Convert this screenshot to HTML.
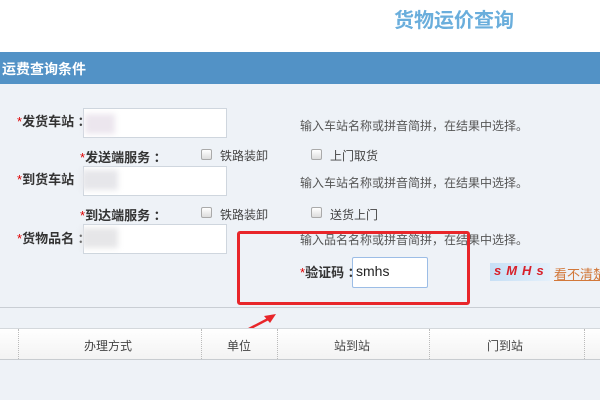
<!DOCTYPE html>
<html><head><meta charset="utf-8"><style>
*{margin:0;padding:0;box-sizing:border-box}
body{width:600px;height:400px;overflow:hidden;background:#eef2f7;font-family:"Liberation Sans","Noto Sans CJK SC",sans-serif;position:relative;color:#333}
.a{position:absolute;white-space:nowrap}
.lab{font-size:13px;color:#333;font-weight:bold}
.lab b{color:#d00;font-weight:normal}
.inp{position:absolute;background:#fff;border:1px solid #cfd6de}
.hint{font-size:12px;color:#555}
.cb{position:absolute;width:11px;height:11px;border:1px solid #aaa;border-radius:2px;background:linear-gradient(#fff,#ddd)}
.opt{font-size:12px;color:#444}
.th{font-size:12px;color:#444}
.vd{position:absolute;top:329px;height:30px;border-left:1px dotted #bbb}
</style></head><body>
<div class="a" style="left:0;top:0;width:600px;height:52px;background:#fff"></div>
<div class="a" style="left:394px;top:4px;font-size:20px;font-weight:bold;color:#6aaedc">货物运价查询</div>
<div class="a" style="left:0;top:52px;width:600px;height:32px;background:#5292c6"></div>
<div class="a" style="left:2px;top:59px;font-size:14px;font-weight:bold;color:#fff">运费查询条件</div>

<div class="a lab" style="left:17px;top:111px"><b>*</b>发货车站 ：</div>
<div class="inp" style="left:83px;top:108px;width:144px;height:30px"></div>
<div class="a" style="left:85px;top:114px;width:30px;height:20px;background:#ece6ee;filter:blur(3px)"></div>
<div class="a hint" style="left:300px;top:117px">输入车站名称或拼音简拼，在结果中选择。</div>

<div class="a lab" style="left:80px;top:147px"><b>*</b>发送端服务 ：</div>
<div class="cb" style="left:201px;top:149px"></div>
<div class="a opt" style="left:220px;top:147px">铁路装卸</div>
<div class="cb" style="left:311px;top:149px"></div>
<div class="a opt" style="left:330px;top:147px">上门取货</div>

<div class="a lab" style="left:17px;top:169px"><b>*</b>到货车站</div>
<div class="inp" style="left:83px;top:166px;width:144px;height:30px"></div>
<div class="a" style="left:82px;top:170px;width:36px;height:20px;background:#e6e6ea;filter:blur(3px)"></div>
<div class="a hint" style="left:300px;top:174px">输入车站名称或拼音简拼，在结果中选择。</div>

<div class="a lab" style="left:80px;top:205px"><b>*</b>到达端服务 ：</div>
<div class="cb" style="left:201px;top:207px"></div>
<div class="a opt" style="left:220px;top:206px">铁路装卸</div>
<div class="cb" style="left:311px;top:207px"></div>
<div class="a opt" style="left:330px;top:206px">送货上门</div>

<div class="a lab" style="left:17px;top:228px"><b>*</b>货物品名 ：</div>
<div class="inp" style="left:83px;top:224px;width:144px;height:30px"></div>
<div class="a" style="left:82px;top:228px;width:36px;height:20px;background:#e6e6e8;filter:blur(3px)"></div>
<div class="a hint" style="left:300px;top:231px">输入品名名称或拼音简拼，在结果中选择。</div>

<div class="a lab" style="left:300px;top:262px"><b>*</b>验证码 ：</div>
<div class="inp" style="left:352px;top:257px;width:76px;height:31px;border:1px solid #9cbde6;border-radius:2px"></div>
<div class="a" style="left:356px;top:263px;font-size:14px;color:#222">smhs</div>
<div class="a" style="left:490px;top:263px;width:60px;height:18px;background:linear-gradient(90deg,#c6dff5,#e4f0fb)"></div>
<div class="a" style="left:494px;top:263px;font-size:13px;font-weight:bold;font-style:italic;color:#d8202a;letter-spacing:5px">sMHs</div>
<div class="a" style="left:554px;top:264px;font-size:13px;color:#d2783a;text-decoration:underline">看不清楚</div>

<div class="a" style="left:237px;top:231px;width:233px;height:74px;border:3px solid #e8262a;border-radius:3px"></div>
<div class="a" style="left:0;top:307px;width:600px;height:1px;background:#c9ced4"></div>
<svg class="a" style="left:240px;top:310px" width="40" height="22"><path d="M7 20 L32 7" stroke="#e8262a" stroke-width="2.5"/><path d="M36 4 L24 6 L30 13 Z" fill="#e8262a"/></svg>

<div class="a" style="left:0;top:328px;width:600px;height:32px;background:linear-gradient(#fff,#f3f3f3);border-top:1px solid #d4d8dc;border-bottom:1px solid #c8ccd0"></div>
<div class="vd" style="left:18px"></div>
<div class="vd" style="left:201px"></div>
<div class="vd" style="left:277px"></div>
<div class="vd" style="left:429px"></div>
<div class="vd" style="left:584px"></div>
<div class="a th" style="left:84px;top:337px">办理方式</div>
<div class="a th" style="left:227px;top:337px">单位</div>
<div class="a th" style="left:334px;top:337px">站到站</div>
<div class="a th" style="left:487px;top:337px">门到站</div>
</body></html>
